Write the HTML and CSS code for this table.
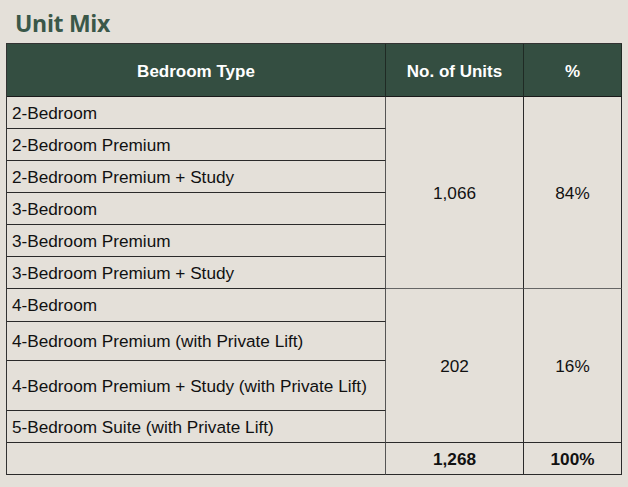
FILE: index.html
```html
<!DOCTYPE html>
<html>
<head>
<meta charset="utf-8">
<link rel="stylesheet" href="styles.css">
</head>
<body>
<h1 class="title">Unit Mix</h1>
<div class="grid">
  <div class="cell head">Bedroom Type</div>
  <div class="cell head center">No. of Units</div>
  <div class="cell head center">%</div>

  <div class="cell type">2-Bedroom</div>
  <div class="cell center num g1">1,066</div>
  <div class="cell center num g1 last">84%</div>
  <div class="cell type">2-Bedroom Premium</div>
  <div class="cell type">2-Bedroom Premium + Study</div>
  <div class="cell type">3-Bedroom</div>
  <div class="cell type">3-Bedroom Premium</div>
  <div class="cell type">3-Bedroom Premium + Study</div>

  <div class="cell type">4-Bedroom</div>
  <div class="cell center num g2">202</div>
  <div class="cell center num g2 last">16%</div>
  <div class="cell type">4-Bedroom Premium (with Private Lift)</div>
  <div class="cell type">4-Bedroom Premium + Study (with Private Lift)</div>
  <div class="cell type">5-Bedroom Suite (with Private Lift)</div>

  <div class="cell type"></div>
  <div class="cell center total">1,268</div>
  <div class="cell center total">100%</div>
</div>
</body>
</html>
```
FILE: styles.css
```css
html, body {
  margin: 0;
  background: #e4e0d9;
}
body {
  padding: 0 6px;
  font-family: "Liberation Sans", Arial, sans-serif;
  color: #111;
}
.title {
  margin: 0 0 4px 0;
  padding: 7px 0 0 9px;
  font-family: "Open Sans", sans-serif;
  font-weight: 700;
  font-size: 23px;
  letter-spacing: -0.3px;
  line-height: 32px;
  color: #3a5849;
}
.grid {
  display: grid;
  width: 616px;
  box-sizing: border-box;
  grid-template-columns: 379px 138px 98px;
  grid-template-rows: 53px 32px 32px 32px 32px 32px 32px 33px 39px 50px 32px 32px;
  border-left: 1px solid #333;
  border-top: 1px solid #333;
}
.cell {
  box-sizing: border-box;
  border-right: 1px solid #2a2a2a;
  border-bottom: 1px solid #2a2a2a;
  font-size: 17.2px;
  padding-top: 1px;
  display: flex;
  align-items: center;
}
.type {
  padding-left: 5px;
  border-right: 1px solid #555;
}
.center {
  justify-content: center;
}
.head {
  background: #344e41;
  color: #fff;
  font-weight: 700;
  font-size: 17px;
  padding-top: 3px;
  justify-content: center;
  border-right-color: #1f2a24;
  border-bottom-color: #1a1a1a;
}
.g1 {
  grid-row: span 6;
  border-bottom: 1px solid #666;
}
.g2 {
  grid-row: span 4;
}
.total {
  font-weight: 700;
}
```
